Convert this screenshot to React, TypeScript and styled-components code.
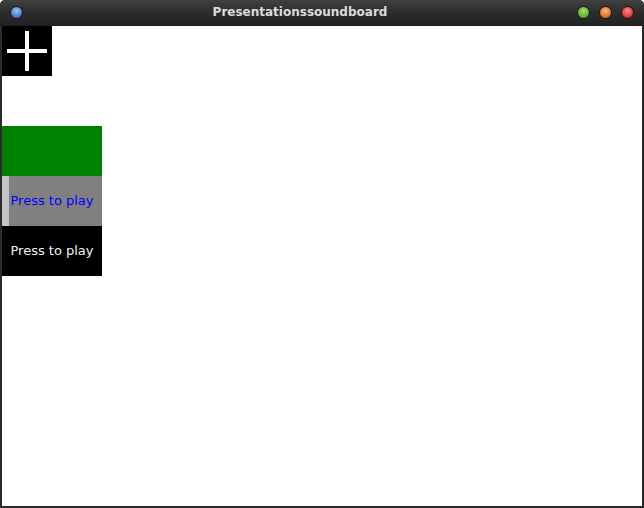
import React from "react";
import styled, { createGlobalStyle } from "styled-components";

const Global = createGlobalStyle`
  html, body { margin: 0; padding: 0; background: #ffffff; }
  body { font-family: "DejaVu Sans", "Liberation Sans", sans-serif; }
`;

const Window = styled.div`
  width: 644px;
  height: 508px;
  display: flex;
  flex-direction: column;
  background: #2b2b2b;
  border-radius: 5px 5px 0 0;
  overflow: hidden;
`;

const TitleBar = styled.div`
  height: 25px;
  border-bottom: 1px solid #1a1a1a;
  background: linear-gradient(#414141, #2c2c2c 50%, #232323);
  display: flex;
  align-items: center;
  padding: 0 11px 0 11px;
  position: relative;
`;

const Title = styled.div`
  position: absolute;
  left: 0;
  right: 44px;
  top: 0;
  height: 25px;
  line-height: 25px;
  text-align: center;
  font-family: "DejaVu Sans", sans-serif;
  font-weight: bold;
  font-size: 12px;
  color: #dcdcdc;
  pointer-events: none;
`;

const Dot = styled.span<{ $c: string; $d: string }>`
  width: 11px;
  height: 11px;
  border-radius: 50%;
  background: radial-gradient(circle at 50% 35%, ${(p) => p.$c} 0%, ${(p) => p.$d} 85%);
  box-shadow: 0 0 0 1px rgba(0, 0, 0, 0.45);
  display: inline-block;
`;

const Spacer = styled.div`
  flex: 1;
`;

const Controls = styled.div`
  display: flex;
  gap: 11px;
`;

const Content = styled.div`
  flex: 1;
  margin: 0 2px 2px 2px;
  background: #ffffff;
  display: flex;
  flex-direction: column;
  align-items: flex-start;
`;

const AddButton = styled.div`
  width: 50px;
  height: 50px;
  background: #000;
  display: flex;
  align-items: center;
  justify-content: center;
  margin-bottom: 50px;
`;

const Tile = styled.div<{ $bg: string; $fg?: string; $strip?: boolean }>`
  width: 100px;
  height: 50px;
  padding-bottom: 2px;
  box-sizing: border-box;
  background: ${(p) => p.$bg};
  color: ${(p) => p.$fg || "#fff"};
  font-family: "DejaVu Sans", sans-serif;
  font-size: 13px;
  display: flex;
  align-items: center;
  justify-content: center;
  position: relative;
  white-space: nowrap;

  &::before {
    content: "";
    display: ${(p) => (p.$strip ? "block" : "none")};
    position: absolute;
    left: 0;
    top: 0;
    bottom: 0;
    width: 7px;
    background: #c4c4c4;
  }
`;

export default function App() {
  return (
    <>
      <Global />
      <Window>
        <TitleBar>
          <Dot $c="#9cc4ff" $d="#3165b8" />
          <Title>Presentationssoundboard</Title>
          <Spacer />
          <Controls>
            <Dot $c="#a8e070" $d="#4d9a1c" />
            <Dot $c="#ffb27a" $d="#d8581c" />
            <Dot $c="#ff8a8a" $d="#cc1f1f" />
          </Controls>
        </TitleBar>
        <Content>
          <AddButton>
            <svg width="40" height="40" viewBox="0 0 40 40">
              <rect x="18" y="0" width="4" height="40" fill="#fff" />
              <rect x="0" y="18" width="40" height="4" fill="#fff" />
            </svg>
          </AddButton>
          <Tile $bg="#008000" />
          <Tile $bg="#808080" $fg="#0000ff" $strip>
            Press to play
          </Tile>
          <Tile $bg="#000000" $fg="#f2f2f2">
            Press to play
          </Tile>
        </Content>
      </Window>
    </>
  );
}
